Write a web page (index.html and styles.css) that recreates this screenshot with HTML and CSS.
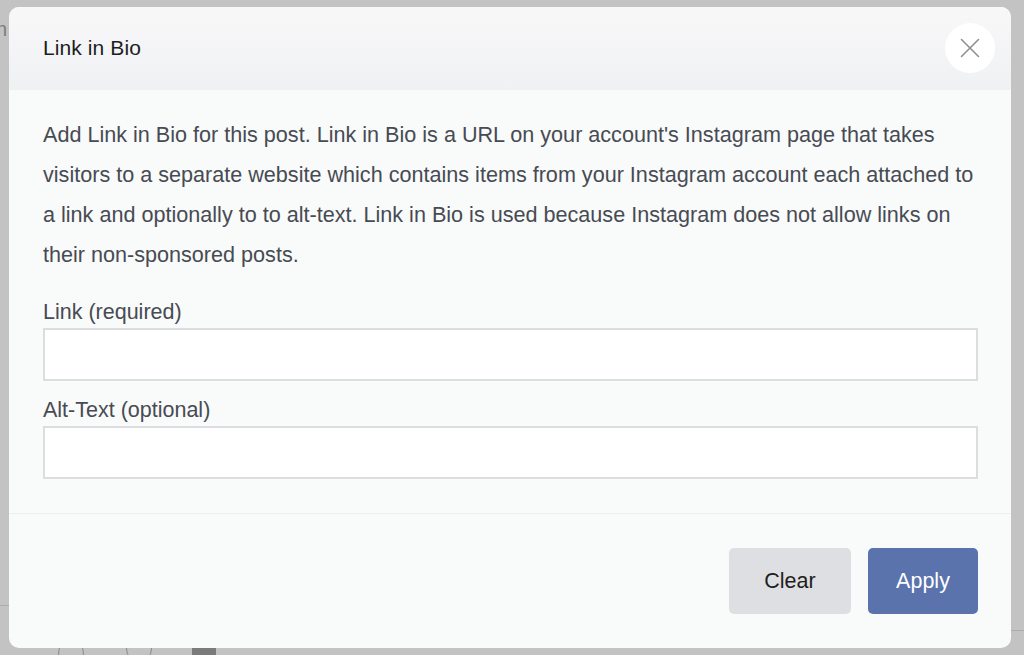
FILE: index.html
```html
<!DOCTYPE html>
<html lang="en">
<head>
<meta charset="utf-8">
<title>Link in Bio</title>
<link rel="stylesheet" href="styles.css">
</head>
<body>
<div class="backdrop">
  <span class="bg-letter">n</span>
  <span class="bg-line-left"></span>
  <span class="bg-line-right"></span>
  <div class="bg-icons">
    <span class="bg-circle c1"></span>
    <span class="bg-circle c2"></span>
    <span class="bg-square"></span>
  </div>
  <div class="modal">
    <header class="modal-header">
      <h1 class="modal-title">Link in Bio</h1>
      <button class="close-btn" aria-label="Close">
        <svg width="20" height="20" viewBox="0 0 20 20"><path d="M1.5 1.5 L18.5 18.5 M18.5 1.5 L1.5 18.5" stroke="#8e8f93" stroke-width="1.6" fill="none" stroke-linecap="round"/></svg>
      </button>
    </header>
    <section class="modal-body">
      <p class="intro">Add Link in Bio for this post. Link in Bio is a URL on your account's Instagram page that takes visitors to a separate website which contains items from your Instagram account each attached to a link and optionally to to alt-text. Link in Bio is used because Instagram does not allow links on their non-sponsored posts.</p>
      <label class="field-label" for="link">Link (required)</label>
      <input class="field-input" id="link" type="text">
      <label class="field-label second" for="alt">Alt-Text (optional)</label>
      <input class="field-input" id="alt" type="text">
    </section>
    <footer class="modal-footer">
      <button class="btn btn-clear">Clear</button>
      <button class="btn btn-apply">Apply</button>
    </footer>
  </div>
</div>
</body>
</html>
```
FILE: styles.css
```css
html, body {
  margin: 0;
  padding: 0;
}
body {
  width: 1024px;
  height: 655px;
  overflow: hidden;
  background: #c3c3c3;
  font-family: "Liberation Sans", Arial, Helvetica, sans-serif;
}
.backdrop {
  position: relative;
  width: 1024px;
  height: 655px;
  box-sizing: border-box;
  padding: 7px 13px 7px 9px;
  display: flex;
}
.bg-letter {
  position: absolute;
  left: -4px;
  top: 18px;
  font-size: 20px;
  color: #7d7d7d;
}
.bg-line-left {
  position: absolute;
  left: 0;
  top: 605px;
  width: 9px;
  height: 1px;
  background: #acacac;
}
.bg-line-right {
  position: absolute;
  right: 0;
  top: 630px;
  width: 13px;
  height: 1px;
  background: #acacac;
}
.bg-icons {
  position: absolute;
  left: 0;
  top: 640px;
  width: 260px;
  height: 30px;
}
.bg-circle {
  position: absolute;
  top: 0;
  width: 24px;
  height: 24px;
  border: 1.5px solid #8a8a8a;
  border-radius: 50%;
}
.bg-circle.c1 { left: 58px; }
.bg-circle.c2 { left: 126px; top: -4px; }
.bg-square {
  position: absolute;
  left: 192px;
  top: 0;
  width: 24px;
  height: 24px;
  background: #7b7b7b;
}
.modal {
  position: relative;
  flex: 1;
  display: flex;
  flex-direction: column;
  background: #f9fafa;
  border-radius: 10px;
  overflow: hidden;
}
.modal-header {
  height: 83px;
  box-sizing: border-box;
  display: flex;
  align-items: center;
  justify-content: space-between;
  padding: 0 16px 0 34px;
  background: linear-gradient(#f8f8f9, #f0f1f3);
  border-bottom: 1px solid #eef0f1;
}
.modal-title {
  margin: 0;
  font-size: 21px;
  font-weight: normal;
  color: #1d1d1f;
  letter-spacing: 0.1px;
}
.close-btn {
  width: 50px;
  height: 50px;
  border: none;
  border-radius: 50%;
  background: #ffffff;
  display: flex;
  align-items: center;
  justify-content: center;
  padding: 0;
  cursor: pointer;
}
.modal-body {
  padding: 25px 32px 34px 34px;
  border-bottom: 1px solid #eceeef;
  display: flex;
  flex-direction: column;
}
.intro {
  margin: 0 0 25px;
  font-size: 21.6px;
  line-height: 40px;
  color: #474b53;
}
.field-label {
  font-size: 21.5px;
  line-height: 24px;
  color: #474b53;
  margin-bottom: 4px;
}
.field-label.second {
  margin-top: 17px;
}
.field-input {
  height: 53px;
  box-sizing: border-box;
  border: 2px solid #dcdde1;
  background: #ffffff;
  border-radius: 0;
  padding: 0 12px;
  font-size: 18px;
  font-family: inherit;
  outline: none;
  margin-right: 1px;
}
.modal-footer {
  flex: 1;
  display: flex;
  justify-content: flex-end;
  align-items: center;
  gap: 17px;
  padding: 0 33px 0 0;
}
.btn {
  height: 66px;
  border: none;
  border-radius: 5px;
  font-family: inherit;
  font-size: 21.5px;
  cursor: pointer;
}
.btn-clear {
  width: 122px;
  background: #dedfe2;
  color: #1e1e20;
}
.btn-apply {
  width: 110px;
  background: #5a73ad;
  color: #ffffff;
}
```
